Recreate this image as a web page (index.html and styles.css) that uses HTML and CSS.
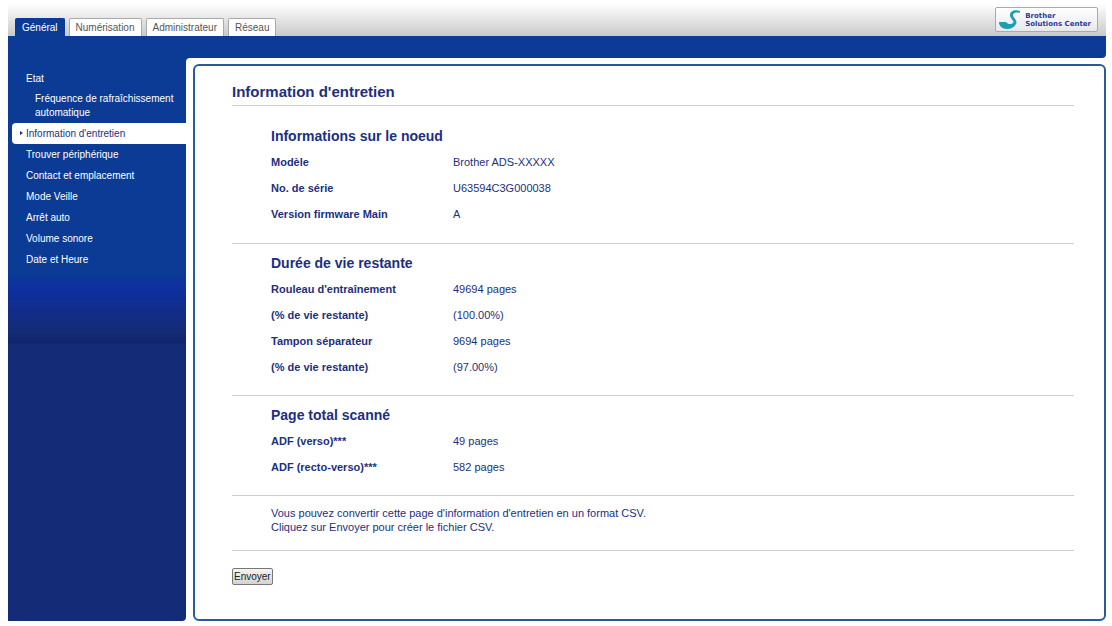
FILE: index.html
```html
<!DOCTYPE html>
<html lang="fr">
<head>
    <meta charset="UTF-8">
    <meta name="viewport" content="width=device-width, initial-scale=1.0">
    <title>Information d'entretien</title>
    <link rel="stylesheet" href="styles.css">
</head>
<body>
    <div class="page">
        <header class="header">
            <nav class="tabs">
                <a class="tab active" href="#">Général</a>
                <a class="tab" href="#">Numérisation</a>
                <a class="tab" href="#">Administrateur</a>
                <a class="tab" href="#">Réseau</a>
            </nav>
            <a class="solutions" href="#">
                <svg class="solutions-icon" width="22" height="20" viewBox="0 0 22 20">
                    <path d="M0 12 L7 12 C8 14 12 15 14 13 C16 11 11 9 11 5 C11 1 16 -1 21 1 L21 3 C17 2 14 3 14 5 C14 8 19 10 17 14 C15 18 11 19 8 19 C3 19 0 16 0 12 Z" fill="#1a9fb5"/>
                </svg>
                <span>Brother<br>Solutions Center</span>
            </a>
        </header>
        <div class="bar"></div>
        <div class="main">
            <nav class="sidebar">
                <a class="menu-item" href="#">Etat</a>
                <a class="menu-item sub" href="#">Fréquence de rafraîchissement automatique</a>
                <a class="menu-item selected" href="#">Information d'entretien</a>
                <a class="menu-item" href="#">Trouver périphérique</a>
                <a class="menu-item" href="#">Contact et emplacement</a>
                <a class="menu-item" href="#">Mode Veille</a>
                <a class="menu-item" href="#">Arrêt auto</a>
                <a class="menu-item" href="#">Volume sonore</a>
                <a class="menu-item" href="#">Date et Heure</a>
            </nav>
            <div class="content-wrap">
                <main class="content">
                    <h1>Information d'entretien</h1>
                    <section class="section first">
                        <h2>Informations sur le noeud</h2>
                        <table class="info">
                            <tr><th scope="row">Modèle</th><td>Brother ADS-XXXXX</td></tr>
                            <tr><th scope="row">No. de série</th><td>U63594C3G000038</td></tr>
                            <tr><th scope="row">Version firmware Main</th><td>A</td></tr>
                        </table>
                    </section>
                    <section class="section">
                        <h2>Durée de vie restante</h2>
                        <table class="info">
                            <tr><th scope="row">Rouleau d'entraînement</th><td>49694 pages</td></tr>
                            <tr><th scope="row">(% de vie restante)</th><td>(100.00%)</td></tr>
                            <tr><th scope="row">Tampon séparateur</th><td>9694 pages</td></tr>
                            <tr><th scope="row">(% de vie restante)</th><td>(97.00%)</td></tr>
                        </table>
                    </section>
                    <section class="section">
                        <h2>Page total scanné</h2>
                        <table class="info">
                            <tr><th scope="row">ADF (verso)***</th><td>49 pages</td></tr>
                            <tr><th scope="row">ADF (recto-verso)***</th><td>582 pages</td></tr>
                        </table>
                    </section>
                    <section class="section">
                        <p>Vous pouvez convertir cette page d'information d'entretien en un format CSV.<br>Cliquez sur Envoyer pour créer le fichier CSV.</p>
                    </section>
                    <form class="actions">
                        <button type="submit" class="submit">Envoyer</button>
                    </form>
                </main>
            </div>
        </div>
    </div>
</body>
</html>
```

FILE: styles.css
```css
* {
    box-sizing: border-box;
}

body {
    margin: 0;
    font-family: "Liberation Sans", Arial, sans-serif;
    font-size: 11px;
    color: #1c2f80;
    background-color: #fff;
}

a {
    color: inherit;
    text-decoration: none;
}

.page {
    margin: 0 6px 0 8px;
}

/* header */
.header {
    display: flex;
    justify-content: space-between;
    align-items: flex-end;
    height: 36px;
    background: linear-gradient(#fff 10%, #c9c9c9);
}

.tabs {
    display: flex;
    gap: 4px;
    padding-left: 7px;
}

.tab {
    height: 18px;
    padding: 0 6px;
    font-size: 10px;
    line-height: 18px;
    color: #555;
    background-color: #fff;
    border: 1px solid #aaa;
    border-bottom: none;
    border-radius: 2px 2px 0 0;
}

.tab.active {
    color: #fff;
    background-color: #0b3b94;
    border-color: #0b3b94;
}

.solutions {
    display: flex;
    align-items: center;
    gap: 4px;
    height: 25px;
    margin: 0 8px 4px 0;
    padding: 0 6px 0 3px;
    font-family: "DejaVu Sans", sans-serif;
    font-size: 7px;
    font-weight: bold;
    line-height: 8px;
    color: #2b3a9c;
    background: linear-gradient(#fff, #e8e8ec);
    border: 1px solid #aaa;
    border-radius: 2px;
}

.bar {
    height: 22px;
    background-color: #0b3b94;
    border-radius: 0 0 4px 0;
}

/* side menu */
.main {
    display: flex;
    background: linear-gradient(#0b3b94, #0b3b94) no-repeat 0 0 / 190px 8px;
}

.sidebar {
    flex: none;
    width: 178px;
    padding-top: 10px;
    background: linear-gradient(#0b3b94 0, #0b3b94 214px, #0e2fa0 230px, #142b75 274px, #10246c 285px, #142c77 287px);
    border-radius: 0 0 4px 0;
}

.menu-item {
    display: block;
    padding-left: 18px;
    font-size: 10px;
    line-height: 21px;
    color: #fff;
}

.menu-item.sub {
    padding: 3px 4px 3px 27px;
    line-height: 14px;
}

.menu-item.selected {
    position: relative;
    margin-left: 4px;
    padding-left: 14px;
    color: #1c2f80;
    background-color: #fff;
    border-radius: 4px 0 0 4px;
}

.menu-item.selected::before {
    content: "";
    position: absolute;
    left: 8px;
    top: 8px;
    border-left: 3px solid #1c2f80;
    border-top: 2px solid transparent;
    border-bottom: 2px solid transparent;
}

/* content */
.content-wrap {
    flex: 1;
    padding: 6px 0 0 7px;
    background-color: #fff;
    border-radius: 4px 0 0 0;
}

.content {
    padding: 16px 30px 34px 37px;
    border: 2px solid #2a5a9a;
    border-radius: 6px;
}

h1 {
    margin: 0;
    padding-bottom: 3px;
    font-size: 15px;
    line-height: 20px;
    border-bottom: 1px solid #ccc;
}

.section {
    padding: 9px 0 15px 39px;
    border-bottom: 1px solid #ccc;
}

.section.first {
    padding-top: 20px;
    padding-bottom: 16px;
}

h2 {
    margin: 0 0 3px;
    font-size: 14px;
    line-height: 20px;
}

.info {
    border-collapse: collapse;
}

.info th,
.info td {
    height: 26px;
    padding: 0;
    text-align: left;
}

.info th {
    width: 182px;
}

.section p {
    margin: 1px 0;
    line-height: 14px;
}

.actions {
    padding-top: 17px;
}

.submit {
    display: block;
    height: 17px;
    padding: 0 1px;
    font-family: inherit;
    font-size: 10px;
    line-height: 15px;
    color: #222;
    background: linear-gradient(#f4f4f4, #d4d4d4);
    border: 1px solid #777;
    border-radius: 2px;
}
```
